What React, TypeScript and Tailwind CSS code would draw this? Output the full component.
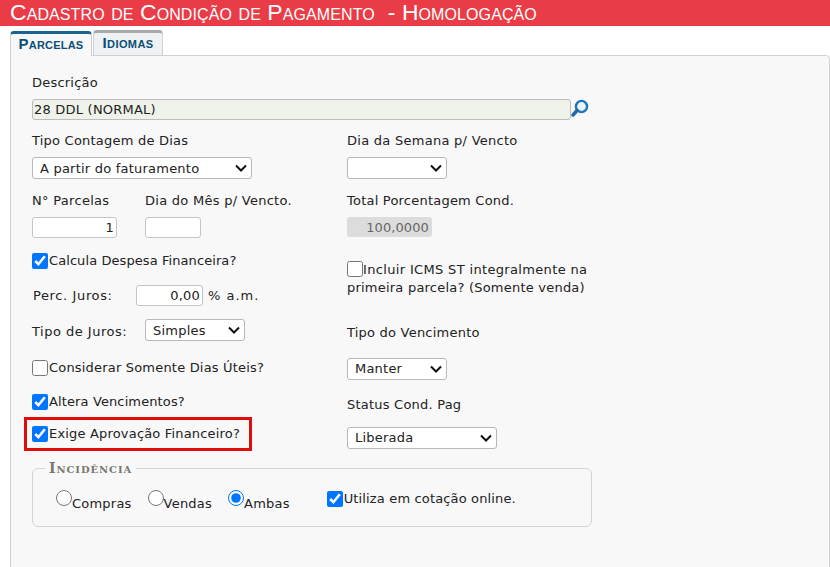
import React from 'react';

const labelCls = 'block text-[13px] leading-[16px] text-[#222]';
const fieldCls = 'bg-white border border-[#c4c4c4] rounded-[3px] h-[21px] px-[6px] text-[13px] text-[#222] outline-none';
const boxCls = 'w-[16px] h-[16px] m-0 shrink-0 accent-[#0075ff]';

const Select: React.FC<{ value: string; className: string; selectClass?: string }> = ({ value, className, selectClass }) => (
  <div className={`relative h-[22px] ${className}`}>
    <select
      defaultValue={value}
      className={`appearance-none block w-full h-full bg-white border border-[#b8b8b8] rounded-[3px] pl-[7px] text-[13px] text-[#222] outline-none ${selectClass ?? ''}`}
    >
      <option value={value}>{value}</option>
    </select>
    <svg width="12" height="8" viewBox="0 0 12 8" className="absolute right-[5px] top-[7px] pointer-events-none">
      <path d="M1 1.5 L6 6.5 L11 1.5" fill="none" stroke="#111" strokeWidth="2" />
    </svg>
  </div>
);

const Check: React.FC<{ label: string; checked?: boolean; textClass?: string }> = ({ label, checked, textClass }) => (
  <label className="flex items-center text-[13px] leading-[16px] text-[#222]">
    <input type="checkbox" defaultChecked={checked} className={boxCls} />
    <span className={`ml-px ${textClass ?? ''}`}>{label}</span>
  </label>
);

const Radio: React.FC<{ label: string; checked?: boolean }> = ({ label, checked }) => (
  <label className="flex items-start text-[13px] leading-[16px] text-[#222]">
    <input type="radio" name="incidencia" defaultChecked={checked} className={boxCls} />
    <span className="mt-[6px]">{label}</span>
  </label>
);

const App: React.FC = () => {
  return (
    <div className="w-[830px] h-[567px] overflow-hidden bg-white font-['DejaVu_Sans',sans-serif] tracking-[0.22px]">
      <div className="h-[26px] bg-[#e93c46] pl-[10px] text-white text-[22.9px] leading-[25px] tracking-[0.1px] font-['Liberation_Sans',sans-serif] [font-variant:small-caps] whitespace-pre">
        Cadastro de Condição de Pagamento  - Homologação
      </div>

      <div className="flex h-[29px] pl-[10px] gap-px pt-[4px] items-end">
        <div className="w-[82px] h-[25px] -mb-px z-10 bg-[#f8f8f8] border border-b-0 border-[#d0d0d0] border-t-[3px] border-t-[#16648f] rounded-t-[4px] text-center text-[15px] leading-[19px] font-bold text-[#0b4f75] [font-variant:small-caps] font-['Liberation_Sans',sans-serif] tracking-[0.2px]">
          Parcelas
        </div>
        <div className="w-[70px] h-[25px] bg-[#eef2f5] border border-b-0 border-[#d0d0d0] border-t-[3px] border-t-[#a9a9a9] rounded-t-[4px] text-center text-[15px] leading-[19px] font-bold text-[#0b4f75] [font-variant:small-caps] font-['Liberation_Sans',sans-serif] tracking-[0.4px]">
          Idiomas
        </div>
      </div>

      <div className="ml-[10px] h-[520px] bg-[#f8f8f8] border border-[#d0d0d0] rounded-tr-[4px] pl-[21px] pt-[19px]">
        <label className={labelCls}>Descrição</label>
        <div className="flex items-start mt-[8px]">
          <input
            readOnly
            value="28 DDL (NORMAL)"
            className="w-[539px] h-[21px] bg-[#eff2e8] border border-[#bdbdbd] rounded-[3px] px-px text-[13px] text-[#222] outline-none"
          />
          <svg width="18" height="20" viewBox="0 0 18 20" className="-mt-[1px]">
            <circle cx="10.5" cy="8.5" r="5.6" fill="#eaf4fb" stroke="#1c78b8" strokeWidth="2.4" />
            <path d="M6 12.5 L2 17" stroke="#1c6aa6" strokeWidth="3.4" strokeLinecap="round" />
          </svg>
        </div>

        <div className="flex mt-[13px]">
          <div className="w-[315px]">
            <label className={labelCls}>Tipo Contagem de Dias</label>
            <Select value="A partir do faturamento" className="w-[220px] mt-[8px]" selectClass="pt-px" />

            <div className="flex mt-[14px]">
              <div className="w-[113px]">
                <label className={`${labelCls} tracking-[0.3px]`}>N° Parcelas</label>
                <input readOnly value="1" className={`${fieldCls} w-[85px] mt-[8px] block text-right pr-[2px]`} />
              </div>
              <div>
                <label className={`${labelCls} tracking-[0.27px]`}>Dia do Mês p/ Vencto.</label>
                <input readOnly value="" className={`${fieldCls} w-[56px] mt-[8px] block`} />
              </div>
            </div>

            <div className="mt-[15px]">
              <Check label="Calcula Despesa Financeira?" checked textClass="tracking-[0.08px]" />
            </div>

            <div className="flex items-center mt-[16px] text-[13px] text-[#222]">
              <span className="w-[104px] pl-[1px] tracking-[0.62px]">Perc. Juros:</span>
              <input readOnly value="0,00" className={`${fieldCls} w-[67px] text-right pr-[2px]`} />
              <span className="ml-[5px] tracking-[1px]">% a.m.</span>
            </div>

            <div className="flex items-center mt-[13px] text-[13px] text-[#222]">
              <span className="w-[113px] pt-[3px] tracking-[0.5px]">Tipo de Juros:</span>
              <Select value="Simples" className="w-[100px]" />
            </div>

            <div className="mt-[18px]">
              <Check label="Considerar Somente Dias Úteis?" textClass="tracking-[0.19px]" />
            </div>

            <div className="mt-[18px]">
              <Check label="Altera Vencimentos?" checked textClass="tracking-[0.12px]" />
            </div>

            <div className="mt-[7px] -ml-[8px] w-[228px] h-[34px] border-[3px] border-[#e00c0c] flex items-center pl-[5px]">
              <Check label="Exige Aprovação Financeiro?" checked textClass="tracking-[0.18px]" />
            </div>
          </div>

          <div>
            <label className={`${labelCls} tracking-[0.27px]`}>Dia da Semana p/ Vencto</label>
            <Select value="" className="w-[100px] mt-[8px]" />

            <label className={`${labelCls} mt-[14px]`}>Total Porcentagem Cond.</label>
            <input disabled value="100,0000" className="block w-[85px] h-[20px] mt-[8px] bg-[#dcdcdc] rounded-[3px] pl-[2px] pr-[3px] text-right text-[13px] tracking-[0.1px] text-[#666]" />

            <div className="mt-[24px] w-[250px] text-[13px] leading-[18px] text-[#222]">
              <input type="checkbox" className={`${boxCls} inline-block align-[-3px]`} />
              <span className="tracking-[0.34px]">Incluir ICMS ST integralmente na</span> primeira parcela? (Somente venda)
            </div>

            <label className={`${labelCls} mt-[28px]`}>Tipo do Vencimento</label>
            <Select value="Manter" className="w-[100px] mt-[17px]" />

            <label className={`${labelCls} mt-[17px]`}>Status Cond. Pag</label>
            <Select value="Liberada" className="w-[150px] mt-[14px]" />
          </div>
        </div>

        <fieldset className="mt-[11px] w-[560px] h-[65px] border border-[#d4d4d4] rounded-[6px] pl-[23px] m-0">
          <legend className="-ml-[11px] px-[4px] text-[14px] leading-[13px] font-bold text-[#77776e] font-['DejaVu_Serif',serif] [font-variant:small-caps] tracking-[0.9px]">
            Incidência
          </legend>
          <div className="flex items-start mt-[15px]">
            <Radio label="Compras" />
            <div className="ml-[16px]"><Radio label="Vendas" /></div>
            <div className="ml-[16px]"><Radio label="Ambas" checked /></div>
            <div className="ml-[37px] mt-px">
              <Check label="Utiliza em cotação online." checked textClass="tracking-[0.15px]" />
            </div>
          </div>
        </fieldset>
      </div>
    </div>
  );
};

export default App;
